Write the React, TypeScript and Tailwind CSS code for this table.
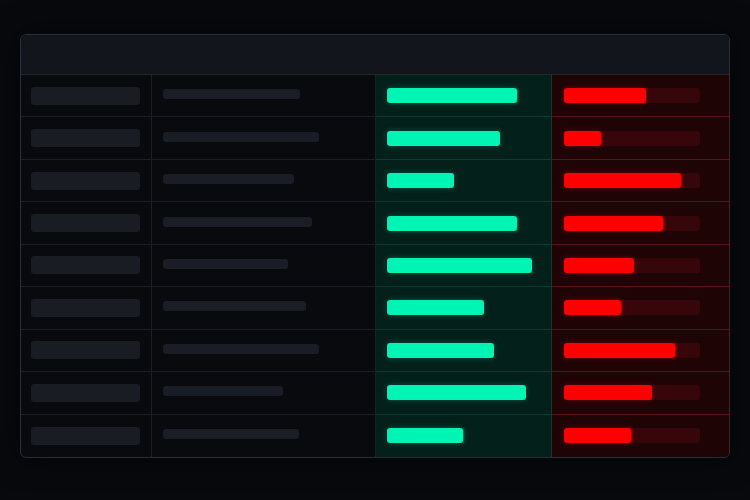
import React from "react";

const rows = [
  { g: 137, a: 130, r: 82 },
  { g: 156, a: 113, r: 37 },
  { g: 131, a: 67, r: 117 },
  { g: 149, a: 130, r: 99 },
  { g: 125, a: 145, r: 70 },
  { g: 143, a: 97, r: 57 },
  { g: 156, a: 107, r: 111 },
  { g: 120, a: 139, r: 88 },
  { g: 136, a: 76, r: 67 },
];

export default function App() {
  return (
    <div className="w-[750px] h-[500px] bg-[#07090d] pt-[34px] px-[20px] overflow-hidden" style={{ fontFamily: "'Liberation Sans', sans-serif" }}>
      <div className="h-[424px] rounded-[6px] border border-[#2a2e36] bg-[#080a0e] flex flex-col overflow-hidden shadow-[0_0_30px_rgba(0,0,0,0.6)]">
        <div className="h-[40px] shrink-0 bg-[#12151c] border-b border-[#23272e]" />
        <div className="flex-1 flex flex-col">
          {rows.map((row, i) => {
            const last = i === rows.length - 1;
            return (
              <div key={i} className="flex-1 grid grid-cols-[131px_224px_176px_1fr]">
                <div className={`flex items-center pl-[10px] border-r border-[#1c2026] ${last ? "" : "border-b"}`}>
                  <div className="w-[109px] h-[18px] rounded-[3px] bg-[#1a1c24]" />
                </div>
                <div className={`flex items-center pl-[11px] pb-[3px] border-r border-[#1c2026] ${last ? "" : "border-b"}`}>
                  <div className="h-[10px] rounded-[3px] bg-[#1a1d25]" style={{ width: row.g }} />
                </div>
                <div className={`flex items-center pl-[11px] bg-[#03201a] border-r border-[#17382f] ${last ? "" : "border-b border-b-[#123a30]"}`}>
                  <div className="h-[15px] rounded-[3px] bg-[#00f5b5] shadow-[0_0_6px_rgba(0,245,181,0.25)]" style={{ width: row.a }} />
                </div>
                <div className={`flex items-center pl-[12px] bg-[#1f0406] ${last ? "" : "border-b border-[#5a1218]"}`}>
                  <div className="w-[136px] h-[15px] rounded-[3px] bg-[#36060a]">
                    <div className="h-[15px] rounded-[3px] bg-[#ff0000] shadow-[0_0_6px_rgba(255,0,0,0.3)]" style={{ width: row.r }} />
                  </div>
                </div>
              </div>
            );
          })}
        </div>
      </div>
    </div>
  );
}
